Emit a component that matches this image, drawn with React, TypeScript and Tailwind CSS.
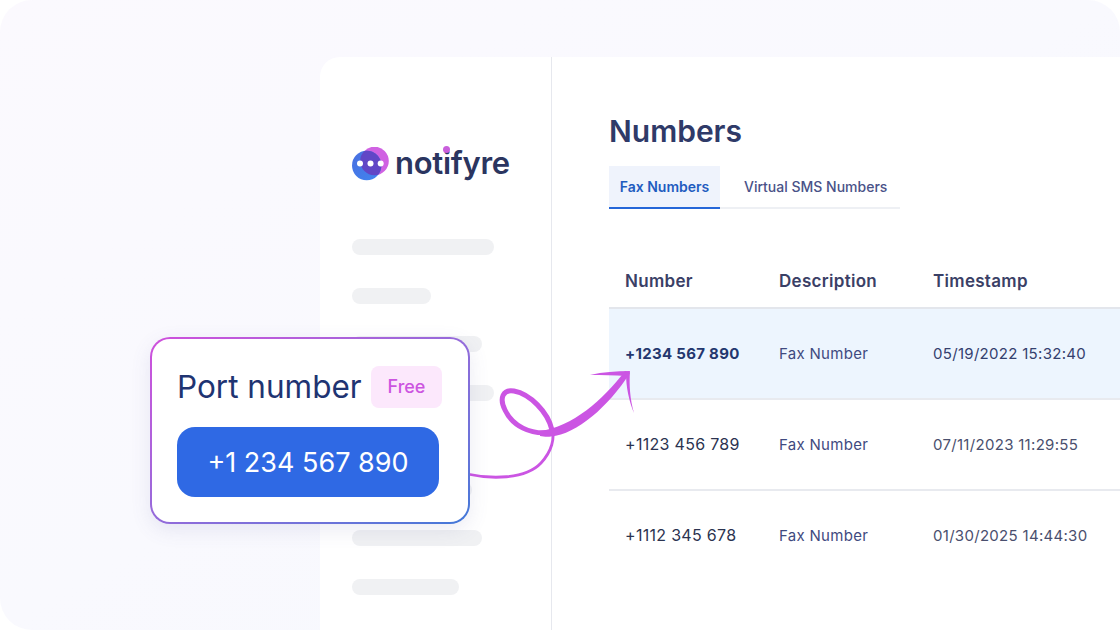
const sideBars = ['w-[142px]', 'w-[79px]', 'w-[130px]', 'w-[142px]', 'w-[100px]', 'w-[120px]', 'w-[130px]', 'w-[107px]'];

const rows = [
  { number: '+1234 567 890', time: '05/19/2022 15:32:40', active: true },
  { number: '+1123 456 789', time: '07/11/2023 11:29:55', active: false },
  { number: '+1112 345 678', time: '01/30/2025 14:44:30', active: false },
];

const Logo = () => (
  <div className="flex items-center gap-[6px]">
    <svg width="37" height="34" viewBox="0 0 37 34">
      <defs>
        <clipPath id="logoOverlap">
          <circle cx="22.5" cy="14" r="14.3" />
        </clipPath>
        <linearGradient id="logoBlue" x1="0" y1="0" x2="1" y2="1">
          <stop offset="0" stopColor="#4a6ee0" />
          <stop offset="1" stopColor="#3f86f0" />
        </linearGradient>
      </defs>
      <circle cx="22.5" cy="14" r="14.3" fill="#d062e2" />
      <circle cx="14.7" cy="18.5" r="14.7" fill="url(#logoBlue)" />
      <circle cx="14.7" cy="18.5" r="14.7" fill="#6146c6" clipPath="url(#logoOverlap)" />
      <circle cx="8" cy="16.5" r="3" fill="#fff" />
      <circle cx="18.5" cy="16.5" r="3" fill="#fff" />
      <circle cx="28.7" cy="16.5" r="3" fill="#fff" />
    </svg>
    <span className="relative -top-[2px] font-['Inter',sans-serif] text-[31px] leading-none font-semibold tracking-[-0.3px] text-[#2b3560]">
      notifyre
      <span className="absolute left-[48px] top-[-1px] h-[7px] w-[7px] rounded-full bg-[#c95fdc]" />
    </span>
  </div>
);

const Arrow = () => (
  <svg className="absolute left-[460px] top-[350px]" width="190" height="140" viewBox="460 350 190 140" fill="none">
    <path d="M467 474C490 479 525 480 541 463C552 451 555 438 552 428" stroke="#cb55e3" strokeWidth="2.8" strokeLinecap="round" />
    <path d="M552 430C548 412 530 394 514 391C503 389 499 398 505 410C512 425 530 436 553 432" stroke="#cb55e3" strokeWidth="5" strokeLinecap="round" />
    <path d="M540 431C572 427 603 400 625 371L630 373C608 407 577 434 551 436.5C547 437 543 436.5 540 436Z" fill="#cb55e3" />
    <path d="M590 375C603 372 616 371 630 371L626 376C614 375 602 375 590 375Z" fill="#cb55e3" />
    <path d="M626 373L630 371C629 385 630 399 634 413C629 401 626 387 626 373Z" fill="#cb55e3" />
  </svg>
);

const PortCard = () => (
  <div className="absolute left-[150px] top-[337px] h-[187px] w-[320px] rounded-[20px] bg-gradient-to-br from-[#cf4fdc] to-[#3f78d8] p-[2px] shadow-[0_6px_20px_rgba(90,90,160,0.12)]">
    <div className="flex h-full flex-col rounded-[18px] bg-white pl-[25px] pr-[26px] pt-[27px]">
      <div className="flex items-center justify-between">
        <span className="text-[31.5px] leading-[42px] text-[#1f3472]">Port number</span>
        <span className="flex h-[42px] w-[71px] items-center justify-center rounded-lg bg-[#fce8fc] text-lg font-medium text-[#cc55e0]">
          Free
        </span>
      </div>
      <div className="mt-[19px] mr-[3px] flex h-[70px] items-center justify-center rounded-[18px] bg-[#2f69e4] pt-[2px] text-[27px] text-white">
        +1 234 567 890
      </div>
    </div>
  </div>
);

export default function App() {
  return (
    <div className="relative h-[630px] w-[1120px] overflow-hidden bg-white font-['Inter',sans-serif]">
      <div className="h-full w-full rounded-[32px] bg-gradient-to-br from-[#fbf9fe] via-[#f9f9fe] to-[#f6f8fd] pl-[320px] pt-[57px]">
        <div className="flex h-full rounded-tl-[20px] bg-white">
          <aside className="w-[232px] shrink-0 border-r border-[#e6e8ee] pl-[32px] pt-[90px]">
            <Logo />
            <div className="mt-[58px] flex flex-col gap-[32.5px]">
              {sideBars.map((w, i) => (
                <div key={i} className={`h-4 rounded-full bg-[#f0f1f3] ${w}`} />
              ))}
            </div>
          </aside>
          <main className="flex-1 pt-[56px]">
            <h1 className="pl-[57px] text-[30px] leading-9 font-semibold text-[#2f3a68]">Numbers</h1>
            <div className="ml-[57px] mt-[17px] flex w-[291px] border-b-2 border-[#eef0f4] text-sm font-medium">
              <div className="-mb-[2px] flex h-[43px] w-[111px] items-center justify-center border-b-2 border-[#2466d8] bg-[#eff3fc] pt-[1px] font-semibold text-[#1f5cc0]">
                Fax Numbers
              </div>
              <div className="flex h-[41px] flex-1 items-center pl-[24px] pt-[1px] text-[#4a5288]">Virtual SMS Numbers</div>
            </div>
            <div className="ml-[57px] mt-[46px]">
              <div className="flex h-[54px] items-center border-b-2 border-[#e3e6ec] pt-[2px] text-[17px] font-semibold tracking-[0.3px] text-[#3a4066]">
                <span className="w-[170px] pl-[16px]">Number</span>
                <span className="w-[154px]">Description</span>
                <span>Timestamp</span>
              </div>
              {rows.map((row, i) => (
                <div
                  key={row.number}
                  className={`flex h-[91px] items-center border-b-2 pt-[2px] text-[15px] tracking-[0.3px] ${i < 2 ? 'border-[#e8eaef]' : 'border-transparent'} ${row.active ? 'bg-[#edf5fe]' : ''}`}
                >
                  <span className={`w-[170px] pl-[16px] ${row.active ? 'font-bold text-[#24376f]' : '-mt-[4px] text-base font-normal text-[#2b3350]'}`}>
                    {row.number}
                  </span>
                  <span className="w-[154px] text-[#3f4a80]">Fax Number</span>
                  <span className={row.active ? 'text-[#34406e]' : 'text-[#4a4f6e]'}>{row.time}</span>
                </div>
              ))}
            </div>
          </main>
        </div>
      </div>
      <Arrow />
      <PortCard />
    </div>
  );
}
